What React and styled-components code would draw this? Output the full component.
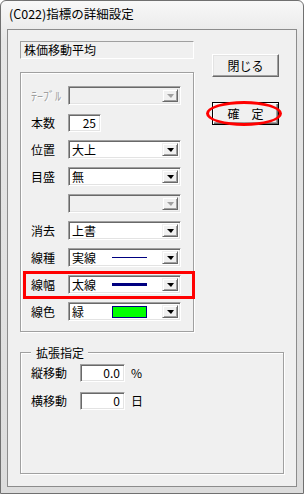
import React from 'react'
import styled, { createGlobalStyle } from 'styled-components'

const GlobalStyle = createGlobalStyle`
  html, body {
    margin: 0;
    padding: 0;
    background: #fff;
  }
  body {
    font-family: "Noto Sans CJK JP", "Noto Sans", sans-serif;
    font-size: 12px;
    color: #000;
  }
`

const rows = [
  { label: 'ﾃｰﾌﾞﾙ', kind: 'combo', disabled: true },
  { label: '本数', kind: 'number', value: '25' },
  { label: '位置', kind: 'combo', value: '大上' },
  { label: '目盛', kind: 'combo', value: '無' },
  { label: '', kind: 'combo', disabled: true },
  { label: '消去', kind: 'combo', value: '上書' },
  { label: '線種', kind: 'combo', value: '実線', swatch: 'thin' },
  { label: '線幅', kind: 'combo', value: '太線', swatch: 'thick', marked: true },
  { label: '線色', kind: 'combo', value: '緑', swatch: 'color' },
]

function App() {
  return (
    <>
      <GlobalStyle />
      <WindowFrame>
        <TitleBar>(C022)指標の詳細設定</TitleBar>
        <Client>
          <TopArea>
            <LeftCol>
              <NameBox>株価移動平均</NameBox>
              <GroupBox h="260px">
                <RowList>
                  {rows.map((r, i) => (
                    <Row key={i}>
                      <RowLabel disabled={r.disabled}>{r.label}</RowLabel>
                      {r.kind === 'number' ? (
                        <NumBox w="33px">{r.value}</NumBox>
                      ) : (
                        <Combo disabled={r.disabled}>
                          <ComboText>
                            <ItemName>{r.value}</ItemName>
                            {r.swatch === 'thin' && <LineSample thick="1px" />}
                            {r.swatch === 'thick' && <LineSample thick="3px" />}
                            {r.swatch === 'color' && <ColorSample />}
                          </ComboText>
                          <DropButton>
                            <Arrow disabled={r.disabled} />
                          </DropButton>
                        </Combo>
                      )}
                      {r.marked && <RedBox />}
                    </Row>
                  ))}
                </RowList>
              </GroupBox>
            </LeftCol>
            <RightCol>
              <PushButton>閉じる</PushButton>
              <ButtonSlot>
                <PushButton isDefault>確　定</PushButton>
                <RedEllipse />
              </ButtonSlot>
            </RightCol>
          </TopArea>
          <GroupBox h="122px" w="264px" mt="20px">
            <Caption>拡張指定</Caption>
            <ExtList>
              <Row>
                <RowLabel w="49px">縦移動</RowLabel>
                <NumBox w="45px">0.0</NumBox>
                <Unit>%</Unit>
              </Row>
              <Row>
                <RowLabel w="49px">横移動</RowLabel>
                <NumBox w="45px">0</NumBox>
                <Unit>日</Unit>
              </Row>
            </ExtList>
          </GroupBox>
        </Client>
      </WindowFrame>
    </>
  )
}

const WindowFrame = styled.div`
  width: 304px;
  height: 494px;
  box-sizing: border-box;
  border: 1px solid #707070;
  border-radius: 6px 6px 0 0;
  background: linear-gradient(#f8f8f8, #e6e6e6 40px, #dcdcdc);
  padding: 0 6px 6px 6px;
  display: flex;
  flex-direction: column;
`
const TitleBar = styled.div`
  height: 28px;
  box-sizing: border-box;
  padding: 0 0 2px 2px;
  display: flex;
  align-items: center;
  font-size: 12.5px;
  line-height: 14px;
  white-space: nowrap;
`
const Client = styled.div`
  flex: 1;
  box-sizing: border-box;
  background: #f0f0f0;
  border: 1px solid #8c8c8c;
  padding: 11px 0 0 12px;
`
const TopArea = styled.div`
  display: flex;
  flex-direction: row;
`
const LeftCol = styled.div`
  width: 174px;
  display: flex;
  flex-direction: column;
`
const RightCol = styled.div`
  margin-left: 18px;
  padding-top: 13px;
  display: flex;
  flex-direction: column;
  gap: 25px;
`
const NameBox = styled.div`
  height: 18px;
  box-sizing: border-box;
  border: 1px solid;
  border-color: #a0a0a0 #fff #fff #a0a0a0;
  padding: 0 3px;
  line-height: 16px;
  font-size: 12px;
  margin-bottom: 13px;
`
const GroupBox = styled.div`
  position: relative;
  box-sizing: border-box;
  height: ${({ h }) => h};
  width: ${({ w }) => w || 'auto'};
  margin-top: ${({ mt }) => mt || '0'};
  border: 1px solid #a0a0a0;
  box-shadow: 1px 1px 0 #fff, inset 1px 1px 0 #fff;
`
const Caption = styled.div`
  position: absolute;
  top: -8px;
  left: 10px;
  padding: 0 4px 0 5px;
  background: #f0f0f0;
  font-size: 12px;
  line-height: 15px;
`
const RowList = styled.div`
  padding: 13px 0 0 10px;
  display: flex;
  flex-direction: column;
  gap: 8px;
`
const ExtList = styled.div`
  padding: 10px 0 0 10px;
  display: flex;
  flex-direction: column;
  gap: 9px;
`
const Row = styled.div`
  position: relative;
  height: 19px;
  display: flex;
  align-items: center;
`
const RowLabel = styled.div`
  width: ${({ w }) => w || '37px'};
  flex-shrink: 0;
  font-size: 12px;
  line-height: 14px;
  white-space: nowrap;
  color: ${({ disabled }) => (disabled ? '#a0a0a0' : '#000')};
  text-shadow: ${({ disabled }) => (disabled ? '1px 1px 0 #fff' : 'none')};
`
const sunken = `
  box-sizing: border-box;
  border: 1px solid;
  border-color: #a0a0a0 #fff #fff #a0a0a0;
  box-shadow: inset 1px 1px 0 #696969, inset -1px -1px 0 #e3e3e3;
`
const Combo = styled.div`
  ${sunken}
  width: 113px;
  height: 19px;
  padding: 2px;
  display: flex;
  align-items: stretch;
  background: ${({ disabled }) => (disabled ? '#f0f0f0' : '#fff')};
`
const ComboText = styled.div`
  flex: 1;
  display: flex;
  align-items: center;
  padding-left: 1px;
  font-size: 12px;
  line-height: 14px;
`
const ItemName = styled.span`
  width: 40px;
  flex-shrink: 0;
  white-space: nowrap;
`
const LineSample = styled.span`
  width: 35px;
  height: ${({ thick }) => thick};
  background: #000080;
`
const ColorSample = styled.span`
  width: 35px;
  height: 12px;
  box-sizing: border-box;
  border: 1px solid #000080;
  background: #00ff00;
`
const DropButton = styled.div`
  width: 16px;
  box-sizing: border-box;
  background: #f0f0f0;
  border: 1px solid;
  border-color: #f0f0f0 #696969 #696969 #f0f0f0;
  box-shadow: inset 1px 1px 0 #fff, inset -1px -1px 0 #a0a0a0;
  display: flex;
  align-items: center;
  justify-content: center;
`
const Arrow = styled.span`
  width: 0;
  height: 0;
  border-left: 4px solid transparent;
  border-right: 3px solid transparent;
  border-top: 4px solid ${({ disabled }) => (disabled ? '#a0a0a0' : '#000')};
`
const NumBox = styled.div`
  ${sunken}
  width: ${({ w }) => w};
  height: 18px;
  background: #fff;
  padding: 0 4px;
  text-align: right;
  font-size: 12px;
  line-height: 16px;
`
const Unit = styled.span`
  margin-left: 6px;
  font-size: 12px;
`
const PushButton = styled.button`
  width: 67px;
  height: 23px;
  box-sizing: border-box;
  margin: 0;
  padding: 0;
  background: #f0f0f0;
  font-family: "Noto Sans CJK JP", "Noto Sans", sans-serif;
  font-size: 12px;
  color: #000;
  border: 1px solid;
  border-color: ${({ isDefault }) => (isDefault ? '#000' : '#fff #696969 #696969 #fff')};
  box-shadow: ${({ isDefault }) =>
    isDefault
      ? 'inset 1px 1px 0 #fff, inset -1px -1px 0 #696969, inset -2px -2px 0 #a0a0a0'
      : 'inset -1px -1px 0 #a0a0a0, inset 1px 1px 0 #e3e3e3'};
`
const ButtonSlot = styled.div`
  position: relative;
`
const RedEllipse = styled.div`
  position: absolute;
  left: -6px;
  top: -1px;
  width: 76px;
  height: 25px;
  box-sizing: border-box;
  border: 3px solid #f00;
  border-radius: 50%;
  pointer-events: none;
`
const RedBox = styled.div`
  position: absolute;
  left: -8px;
  top: -4px;
  width: 172px;
  height: 28px;
  box-sizing: border-box;
  border: 3px solid #f00;
  pointer-events: none;
`

export default App
